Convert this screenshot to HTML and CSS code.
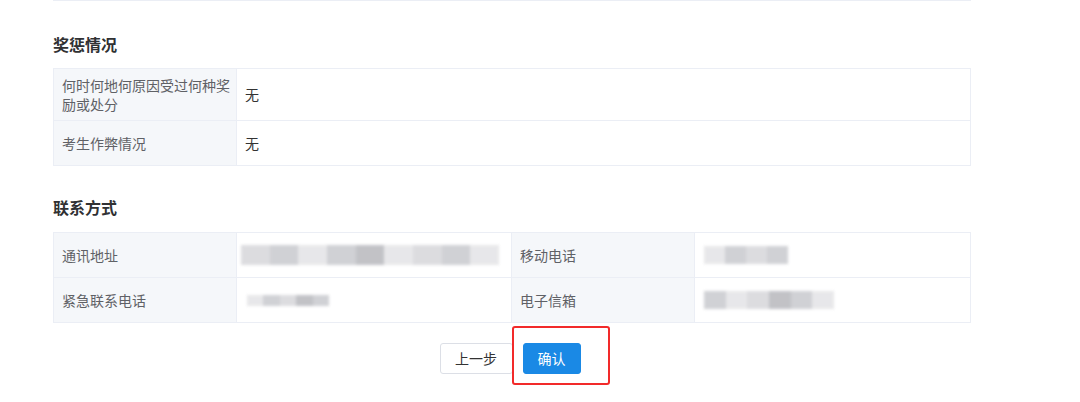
FILE: index.html
```html
<!DOCTYPE html>
<html lang="zh-CN">
<head>
<meta charset="utf-8">
<title>确认信息</title>
<link rel="stylesheet" href="styles.css">
</head>
<body>
<div class="page">
  <div class="tail">
    <div class="tail-label"></div>
    <div class="tail-value"></div>
  </div>

  <h3 class="section-title first">奖惩情况</h3>
  <table class="info">
    <colgroup><col class="c-label"><col></colgroup>
    <tr class="r52">
      <td class="label">何时何地何原因受过何种奖励或处分</td>
      <td class="value">无</td>
    </tr>
    <tr class="r45">
      <td class="label">考生作弊情况</td>
      <td class="value">无</td>
    </tr>
  </table>

  <h3 class="section-title">联系方式</h3>
  <table class="info">
    <colgroup><col class="c-label"><col class="c-value"><col class="c-label"><col></colgroup>
    <tr class="r45">
      <td class="label">通讯地址</td>
      <td class="value"><span class="blur b-addr"><i class="s1"></i><i class="s2"></i><i class="s3"></i><i class="s2"></i><i class="s4"></i><i class="s3"></i><i class="s1"></i><i class="s2"></i><i class="s3"></i></span></td>
      <td class="label">移动电话</td>
      <td class="value"><span class="blur b-mobile"><i class="s3"></i><i class="s2"></i><i class="s1"></i><i class="s2"></i></span></td>
    </tr>
    <tr class="r45">
      <td class="label">紧急联系电话</td>
      <td class="value"><span class="blur b-phone"><i class="s3"></i><i class="s2"></i><i class="s1"></i><i class="s4"></i><i class="s2"></i></span></td>
      <td class="label">电子信箱</td>
      <td class="value"><span class="blur b-mail"><i class="s2"></i><i class="s3"></i><i class="s1"></i><i class="s4"></i><i class="s2"></i><i class="s3"></i></span></td>
    </tr>
  </table>

  <div class="actions">
    <button class="btn btn-default" type="button">上一步</button>
    <span class="mark">
      <button class="btn btn-primary" type="button">确认</button>
      <span class="highlight"></span>
    </span>
  </div>
</div>
</body>
</html>
```

FILE: styles.css
```css
* { box-sizing: border-box; }
html, body { margin: 0; padding: 0; background: #fff; }
body {
  font-family: "Microsoft YaHei", "Noto Sans CJK SC", "Noto Sans", sans-serif;
  font-size: 14px;
  color: #333;
  width: 1080px;
  height: 402px;
  overflow: hidden;
}
.page {
  width: 918px;
  margin-left: 53px;
}
.tail {
  display: flex;
  height: 2px;
  border-left: 1px solid #ebeef5;
  border-right: 1px solid #ebeef5;
  border-bottom: 1px solid #ebeef5;
  margin-top: -1px;
}
.tail-label {
  width: 183px;
  background: #f5f7fa;
  border-right: 1px solid #ebeef5;
}
.tail-value { flex: 1; }

.section-title {
  margin: 30px 0 14px;
  font-size: 16px;
  line-height: 22px;
  font-weight: bold;
  color: #303133;
}
.section-title.first { margin-top: 32px; margin-bottom: 13px; }

.info {
  width: 918px;
  border-collapse: collapse;
  table-layout: fixed;
}
.c-label { width: 183px; }
.c-value { width: 275px; }
.info td {
  border: 1px solid #ebeef5;
  padding: 6px 4px 6px 8px;
  line-height: 19px;
  vertical-align: middle;
}
.r52 td { height: 52px; }
.r45 td { height: 45px; }
.info .label {
  background: #f5f7fa;
  color: #5f6166;
}
.info .value { color: #333; }

.blur {
  display: flex;
  filter: blur(1.8px);
  opacity: 0.8;
}
.blur i { display: block; flex: 1; height: 100%; }
.blur .s1 { background: #d4d4d8; }
.blur .s2 { background: #c5c6cb; }
.blur .s3 { background: #e2e2e5; }
.blur .s4 { background: #b3b4b9; }
.b-addr { width: 258px; height: 20px; margin-left: -4px; }
.b-mobile { width: 84px; height: 18px; margin-left: 1px; }
.b-phone { width: 82px; height: 11px; margin-left: 2px; }
.b-mail { width: 130px; height: 18px; margin-left: 1px; }

.actions {
  display: flex;
  justify-content: center;
  gap: 10px;
  margin-top: 20px;
  padding-right: 4px;
}
.btn {
  height: 31px;
  padding: 0;
  font-family: inherit;
  font-size: 14px;
  line-height: 29px;
  border-radius: 3px;
  cursor: pointer;
}
.btn-default {
  width: 73px;
  background: #fff;
  border: 1px solid #dcdfe6;
  color: #333;
}
.btn-primary {
  width: 58px;
  background: #1a89e5;
  border: 1px solid #1a89e5;
  color: #fff;
}
.mark {
  position: relative;
  display: inline-block;
}
.highlight {
  position: absolute;
  left: -11px;
  top: -17px;
  width: 98px;
  height: 59px;
  border: 2px solid #f22a2a;
  border-radius: 3px;
  pointer-events: none;
}
```
